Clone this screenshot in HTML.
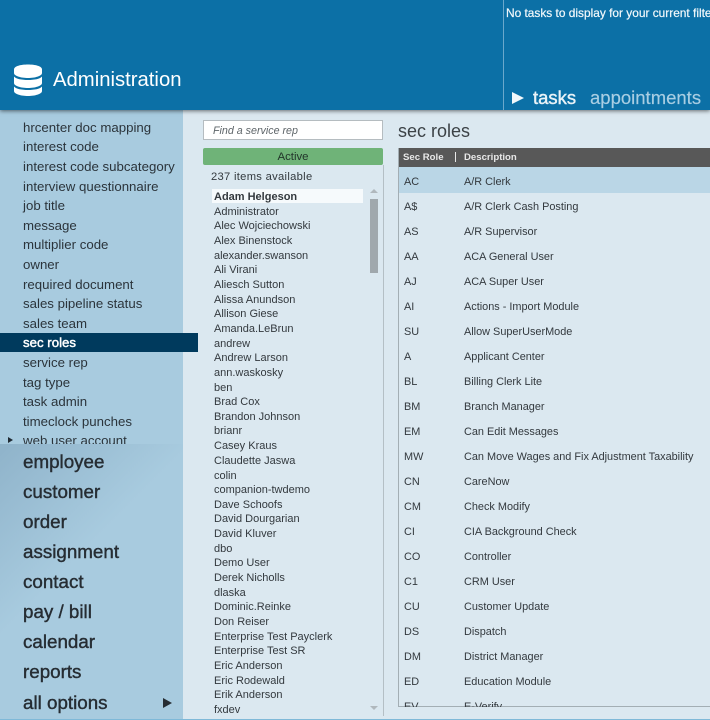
<!DOCTYPE html>
<html><head><meta charset="utf-8"><style>
html,body{margin:0;padding:0}
body{width:710px;height:720px;overflow:hidden;position:relative;background:#dbe8f0;font-family:"Liberation Sans",sans-serif;color:#2b2f33}
.a{position:absolute;white-space:nowrap}
#top{left:0;top:0;width:710px;height:110px;background:#0c70a6;box-shadow:0 1px 4px rgba(0,0,0,.55);z-index:5}
#side{left:0;top:110px;width:183px;height:609px;background:#a8cbdf}
#bot{left:0;top:444px;width:183px;height:275px;background:linear-gradient(135deg,#8fb3ca 0,#a8cbdf 42%);overflow:hidden}
.m{left:23px;font-size:13.25px;line-height:20px;height:20px;color:#2b343b;margin-top:1px}
.b{left:23px;font-size:18.8px;line-height:24px;height:24px;color:#262d33;-webkit-text-stroke:.4px #262d33}
.l{left:214px;font-size:11px;line-height:15px;height:15px;color:#33393e;margin-top:1px}
.c1,.c2{font-size:10.9px;line-height:16px;height:16px;color:#33393e;margin-top:1px}
.c1{left:404px}.c2{left:464px}
</style></head><body>
<div class="a" id="top"></div>
<div class="a" style="left:503px;top:0;width:1px;height:110px;background:#6ba8cc;z-index:6"></div>
<svg class="a" style="left:14px;top:64px;z-index:6" width="28" height="32" viewBox="0 0 28 32"><g fill="#fff"><path d="M14 .5C21 .5 28 2 28 5.500V9C28 12 21 14 14 14S0 12 0 9V5.500C0 2 7 .5 14 .5Z"/><path d="M0 12.500C2 15 8 16 14 16S26 15 28 12.500V19C28 22 21 24 14 24S0 22 0 19Z"/><path d="M0 22.500C2 25 8 26 14 26S26 25 28 22.500V27C28 30 21 32 14 32S0 30 0 27Z"/></g></svg>
<div class="a" style="left:53px;top:67px;font-size:20.3px;line-height:26px;color:#fff;z-index:6">Administration</div>
<div class="a" style="left:506px;top:6px;font-size:11.9px;line-height:15px;color:#f2f8fb;z-index:6;-webkit-text-stroke:.2px #f2f8fb">No tasks to display for your current filter</div>
<div class="a" style="left:512px;top:92px;width:0;height:0;border-left:12px solid #f2f8fb;border-top:6.500px solid transparent;border-bottom:6.500px solid transparent;z-index:6"></div>
<div class="a" style="left:533px;top:86px;font-size:18.5px;line-height:24px;color:#eaf3f8;z-index:6;-webkit-text-stroke:.4px #eaf3f8">tasks</div>
<div class="a" style="left:590px;top:86px;font-size:18.5px;line-height:24px;color:#a9cee3;z-index:6;-webkit-text-stroke:.15px #a9cee3">appointments</div>

<div class="a" id="side"></div>
<div class="a m" style="top:117px">hrcenter doc mapping</div>
<div class="a m" style="top:136px">interest code</div>
<div class="a m" style="top:156px">interest code subcategory</div>
<div class="a m" style="top:176px">interview questionnaire</div>
<div class="a m" style="top:195px">job title</div>
<div class="a m" style="top:215px">message</div>
<div class="a m" style="top:234px">multiplier code</div>
<div class="a m" style="top:254px">owner</div>
<div class="a m" style="top:274px">required document</div>
<div class="a m" style="top:293px">sales pipeline status</div>
<div class="a m" style="top:313px">sales team</div>
<div class="a" style="left:0;top:333px;width:198px;height:19px;background:#003a5d"></div>
<div class="a m" style="top:332px;color:#fff;-webkit-text-stroke:.45px #fff">sec roles</div>
<div class="a m" style="top:352px">service rep</div>
<div class="a m" style="top:372px">tag type</div>
<div class="a m" style="top:391px">task admin</div>
<div class="a m" style="top:411px">timeclock punches</div>
<div class="a m" style="top:430px">web user account</div>
<div class="a" style="left:8px;top:437px;width:0;height:0;border-left:5px solid #1f2a33;border-top:3.500px solid transparent;border-bottom:3.500px solid transparent"></div>
<div class="a" id="bot"></div>
<div class="a b" style="top:450px">employee</div>
<div class="a b" style="top:480px">customer</div>
<div class="a b" style="top:510px">order</div>
<div class="a b" style="top:540px">assignment</div>
<div class="a b" style="top:570px">contact</div>
<div class="a b" style="top:600px">pay / bill</div>
<div class="a b" style="top:630px">calendar</div>
<div class="a b" style="top:660px">reports</div>
<div class="a b" style="top:691px">all options</div>
<div class="a" style="left:163px;top:698px;width:0;height:0;border-left:9px solid #262d33;border-top:5px solid transparent;border-bottom:5px solid transparent"></div>
<div class="a" style="left:0;top:719px;width:710px;height:1px;background:#7fb9d8"></div>

<div class="a" style="left:203px;top:120px;width:178px;height:18px;background:#fff;border:1px solid #b5bcc0"></div>
<div class="a" style="left:213px;top:123px;font-size:10.7px;font-style:italic;line-height:16px;color:#5e6569">Find a service rep</div>
<div class="a" style="left:203px;top:148px;width:180px;height:17px;background:#6fb378;border-radius:2px;text-align:center;font-size:11.4px;line-height:19px;color:#22352a">Active</div>
<div class="a" style="left:211px;top:169px;font-size:11.2px;line-height:16px;color:#33393e;letter-spacing:.3px">237 items available</div>
<div class="a" style="left:383px;top:165px;width:1px;height:551px;background:#b4bfc5"></div>
<div class="a" style="left:212px;top:189px;width:151px;height:14px;background:#f6fafc"></div>

<div class="a l" style="top:189px;font-weight:bold">Adam Helgeson</div>
<div class="a l" style="top:204px">Administrator</div>
<div class="a l" style="top:218px">Alec Wojciechowski</div>
<div class="a l" style="top:233px">Alex Binenstock</div>
<div class="a l" style="top:248px">alexander.swanson</div>
<div class="a l" style="top:262px">Ali Virani</div>
<div class="a l" style="top:277px">Aliesch Sutton</div>
<div class="a l" style="top:292px">Alissa Anundson</div>
<div class="a l" style="top:306px">Allison Giese</div>
<div class="a l" style="top:321px">Amanda.LeBrun</div>
<div class="a l" style="top:336px">andrew</div>
<div class="a l" style="top:350px">Andrew Larson</div>
<div class="a l" style="top:365px">ann.waskosky</div>
<div class="a l" style="top:380px">ben</div>
<div class="a l" style="top:394px">Brad Cox</div>
<div class="a l" style="top:409px">Brandon Johnson</div>
<div class="a l" style="top:423px">brianr</div>
<div class="a l" style="top:438px">Casey Kraus</div>
<div class="a l" style="top:453px">Claudette Jaswa</div>
<div class="a l" style="top:468px">colin</div>
<div class="a l" style="top:482px">companion-twdemo</div>
<div class="a l" style="top:497px">Dave Schoofs</div>
<div class="a l" style="top:511px">David Dourgarian</div>
<div class="a l" style="top:526px">David Kluver</div>
<div class="a l" style="top:541px">dbo</div>
<div class="a l" style="top:555px">Demo User</div>
<div class="a l" style="top:570px">Derek Nicholls</div>
<div class="a l" style="top:585px">dlaska</div>
<div class="a l" style="top:599px">Dominic.Reinke</div>
<div class="a l" style="top:614px">Don Reiser</div>
<div class="a l" style="top:629px">Enterprise Test Payclerk</div>
<div class="a l" style="top:643px">Enterprise Test SR</div>
<div class="a l" style="top:658px">Eric Anderson</div>
<div class="a l" style="top:673px">Eric Rodewald</div>
<div class="a l" style="top:687px">Erik Anderson</div>
<div class="a" style="left:214px;top:703px;width:150px;height:11px;overflow:hidden;font-size:11px;line-height:15px;color:#33393e">fxdev</div>

<div class="a" style="left:370px;top:189px;width:0;height:0;border-bottom:4px solid #b0b8bd;border-left:4px solid transparent;border-right:4px solid transparent"></div>
<div class="a" style="left:370px;top:199px;width:8px;height:74px;background:#a0a8ad"></div>
<div class="a" style="left:370px;top:706px;width:0;height:0;border-top:4px solid #b0b8bd;border-left:4px solid transparent;border-right:4px solid transparent"></div>

<div class="a" style="left:398px;top:120px;font-size:18px;line-height:22px;color:#3c4246">sec roles</div>
<div class="a" style="left:398px;top:148px;width:1px;height:559px;background:#a3aeb4"></div>
<div class="a" style="left:398px;top:706px;width:312px;height:1px;background:#a3aeb4"></div>
<div class="a" style="left:399px;top:148px;width:311px;height:19px;background:#585858"></div>
<div class="a" style="left:403px;top:150px;font-size:9.6px;font-weight:bold;line-height:16px;color:#e8e8e8">Sec Role</div>
<div class="a" style="left:455px;top:152px;width:1px;height:10px;background:#e8e8e8"></div>
<div class="a" style="left:464px;top:150px;font-size:9.6px;font-weight:bold;line-height:16px;color:#e8e8e8">Description</div>
<div class="a" style="left:399px;top:167px;width:311px;height:26px;background:#bad6e6"></div>

<div class="a c1" style="top:173px">AC</div><div class="a c2" style="top:173px">A/R Clerk</div>
<div class="a c1" style="top:198px">A$</div><div class="a c2" style="top:198px">A/R Clerk Cash Posting</div>
<div class="a c1" style="top:223px">AS</div><div class="a c2" style="top:223px">A/R Supervisor</div>
<div class="a c1" style="top:248px">AA</div><div class="a c2" style="top:248px">ACA General User</div>
<div class="a c1" style="top:273px">AJ</div><div class="a c2" style="top:273px">ACA Super User</div>
<div class="a c1" style="top:298px">AI</div><div class="a c2" style="top:298px">Actions - Import Module</div>
<div class="a c1" style="top:323px">SU</div><div class="a c2" style="top:323px">Allow SuperUserMode</div>
<div class="a c1" style="top:348px">A</div><div class="a c2" style="top:348px">Applicant Center</div>
<div class="a c1" style="top:373px">BL</div><div class="a c2" style="top:373px">Billing Clerk Lite</div>
<div class="a c1" style="top:398px">BM</div><div class="a c2" style="top:398px">Branch Manager</div>
<div class="a c1" style="top:423px">EM</div><div class="a c2" style="top:423px">Can Edit Messages</div>
<div class="a c1" style="top:448px">MW</div><div class="a c2" style="top:448px">Can Move Wages and Fix Adjustment Taxability</div>
<div class="a c1" style="top:473px">CN</div><div class="a c2" style="top:473px">CareNow</div>
<div class="a c1" style="top:498px">CM</div><div class="a c2" style="top:498px">Check Modify</div>
<div class="a c1" style="top:523px">CI</div><div class="a c2" style="top:523px">CIA Background Check</div>
<div class="a c1" style="top:548px">CO</div><div class="a c2" style="top:548px">Controller</div>
<div class="a c1" style="top:573px">C1</div><div class="a c2" style="top:573px">CRM User</div>
<div class="a c1" style="top:598px">CU</div><div class="a c2" style="top:598px">Customer Update</div>
<div class="a c1" style="top:623px">DS</div><div class="a c2" style="top:623px">Dispatch</div>
<div class="a c1" style="top:648px">DM</div><div class="a c2" style="top:648px">District Manager</div>
<div class="a c1" style="top:673px">ED</div><div class="a c2" style="top:673px">Education Module</div>
<div class="a c1" style="top:698px;height:8px;overflow:hidden">EV</div><div class="a c2" style="top:698px;height:8px;overflow:hidden">E-Verify</div>
</body></html>
